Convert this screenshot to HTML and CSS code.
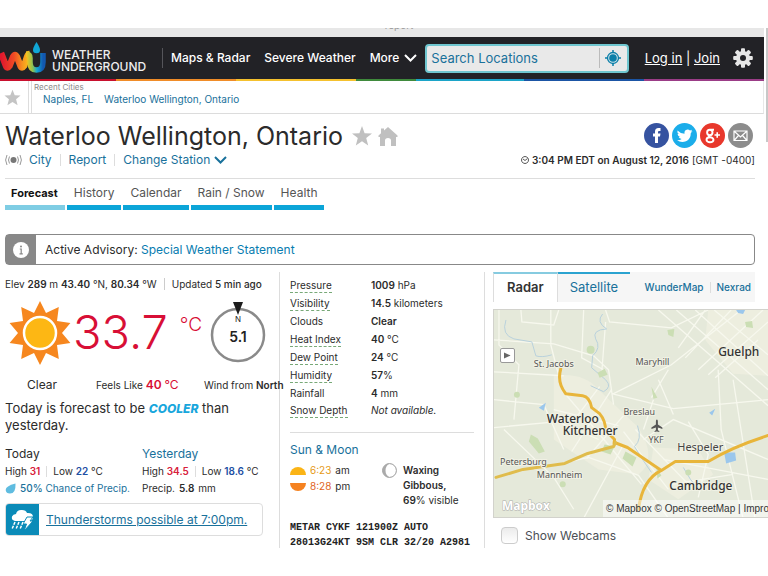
FILE: index.html
```html
<!DOCTYPE html>
<html lang="en">
<head>
<meta charset="utf-8">
<title>Waterloo Wellington, Ontario Forecast | Weather Underground</title>
<link rel="stylesheet" href="styles.css">
</head>
<body>
<div class="window-strip"><span>report</span></div>
<header class="topbar">
  <a class="brand" href="#">
    <svg class="brand-mark" viewBox="0 0 46 32" aria-hidden="true">
      <defs>
        <linearGradient id="warm" x1="0" x2="1"><stop offset="0" stop-color="#e0162e"/><stop offset=".45" stop-color="#f04a24"/><stop offset=".75" stop-color="#f79420"/><stop offset="1" stop-color="#fcc41c"/></linearGradient>
        <linearGradient id="cool" x1="0" x2="1"><stop offset="0" stop-color="#fcc41c"/><stop offset=".4" stop-color="#8cc152"/><stop offset=".65" stop-color="#10a7d6"/><stop offset="1" stop-color="#1258b0"/></linearGradient>
      </defs>
      <path d="M1 11L6 24Q7.500 27 9.500 24L13 15Q15 11 17 15L20.500 24Q22 27 24 24L27 15Q28 12 29.500 12" fill="none" stroke="url(#warm)" stroke-width="6.500"/>
      <path d="M26 12Q30 12 30 16V20Q30 28 36.500 28Q43 28 43 20V11" fill="none" stroke="url(#cool)" stroke-width="5.500"/>
      <path d="M36.500 0Q40 5.500 40 8A3.500 3.300 0 0 1 33 8Q33 5.500 36.500 0Z" fill="#10a7d6"/>
    </svg>
    <span class="brand-name">WEATHER<br>UNDERGROUND</span>
  </a>
  <nav class="mainnav">
    <a href="#">Maps &amp; Radar</a>
    <a href="#">Severe Weather</a>
    <a href="#">More <svg class="chev" viewBox="0 0 13 8" aria-hidden="true"><path d="M1 1L6.500 6.500L12 1"/></svg></a>
  </nav>
  <form class="search">
    <input type="text" placeholder="Search Locations" aria-label="Search Locations">
    <button type="button" aria-label="Use my location">
      <svg viewBox="0 0 16 16" aria-hidden="true"><circle cx="8" cy="8" r="5.500" fill="#cfe3ea" stroke="#0b7fa8" stroke-width="1.300"/><circle cx="8" cy="8" r="3.800" fill="#0b7fa8"/><path d="M8 0V3M8 13V16M0 8H3M13 8H16" stroke="#0b7fa8" stroke-width="1.500"/></svg>
    </button>
  </form>
  <div class="account"><a href="#">Log in</a> | <a href="#">Join</a></div>
  <button class="gear" type="button" aria-label="Settings">
    <svg viewBox="-10 -10 20 20" aria-hidden="true"><g fill="#e6e6e6"><circle r="7"/><g id="cog"><rect x="-2" y="-9.800" width="4" height="19.600" rx="1"/><rect x="-9.800" y="-2" width="19.600" height="4" rx="1"/></g><use href="#cog" transform="rotate(45)"/></g><circle r="3" fill="#222226"/></svg>
  </button>
</header>
<div class="rainbow"><i></i><i></i><i></i><i></i><i></i><i></i><i></i></div>
<div class="recent">
  <button class="star" type="button" aria-label="Favorites"><svg viewBox="0 0 20 20" aria-hidden="true"><path d="M10 1L12.600 7.300L19.500 7.700L14.200 12.100L16 19L10 15.200L4 19L5.800 12.100L.5 7.700L7.400 7.300Z"/></svg></button>
  <div class="recent-list">
    <div class="recent-title">Recent Cities</div>
    <div class="recent-links"><a href="#">Naples, FL</a><a href="#">Waterloo Wellington, Ontario</a></div>
  </div>
</div>

<main>
  <section class="place">
    <div class="place-row">
      <h1>Waterloo Wellington, Ontario</h1>
      <svg class="mark" viewBox="0 0 20 20" aria-hidden="true"><path d="M10 0L12.600 7.300L20 7.500L14.200 12.100L16.200 19.500L10 15.200L3.800 19.500L5.800 12.100L0 7.500L7.400 7.300Z"/></svg>
      <svg class="mark" viewBox="0 0 20 20" aria-hidden="true"><path d="M10 1L19.500 9.500V11H18V20H13V14.500Q13 12 10 12Q7 12 7 14.500V20H2V11H.5V9.500L3 7.200V2.500H6V4.600Z"/></svg>
      <div class="social">
        <a href="#" aria-label="Facebook"><svg viewBox="0 0 25 25"><circle cx="12.500" cy="12.500" r="12.500" fill="#3653a0"/><path d="M11 20V13.500H9V10.500H11V8.500Q11 5 14.500 5H16.500V8H15Q14 8 14 9V10.500H16.500L16 13.500H14V20Z" fill="#fff"/></svg></a>
        <a href="#" aria-label="Twitter"><svg viewBox="0 0 25 25"><circle cx="12.500" cy="12.500" r="12.500" fill="#1badea"/><path d="M5.500 7.500Q8.500 10.700 12.500 10.800Q12 7 15.500 6.500Q17 6.400 18 7.500L20 6.800Q19.700 8 18.700 8.600L20.500 8.200L18.800 10Q18.800 16 14 18.300Q9 20 5 17.300Q8 17.400 9.600 16.100Q7.300 15.700 6.700 14H8Q5.700 13 5.500 10.700L6.800 11Q4.700 9.500 5.500 7.500Z" fill="#fff"/></svg></a>
        <a href="#" aria-label="Google Plus"><svg viewBox="0 0 25 25"><circle cx="12.500" cy="12.500" r="12.500" fill="#e8382c"/><g fill="none" stroke="#fff" stroke-width="1.900"><circle cx="9.800" cy="9.500" r="2.700"/><path d="M10.500 6.800H14M9.500 12.200Q8 13.500 10 14.300"/><ellipse cx="10" cy="16.700" rx="3.500" ry="2.500"/><path d="M14.500 12H20M17.200 9.300V14.700" stroke-width="1.600"/></g></svg></a>
        <a href="#" aria-label="Email"><svg viewBox="0 0 25 25"><circle cx="12.500" cy="12.500" r="12.500" fill="#8c8c8c"/><path d="M6 8H19V17.500H6ZM6.500 8.500L12.500 14L18.500 8.500M6.500 17L10.500 12.500M18.500 17L14.500 12.500" fill="none" stroke="#fff" stroke-width="1.200"/></svg></a>
      </div>
    </div>
    <div class="station-row">
      <svg class="signal" viewBox="0 0 17 12" aria-hidden="true"><circle cx="8.500" cy="6" r="3" fill="#777"/><path d="M4.500 2.500Q2.500 6 4.500 9.500M12.500 2.500Q14.500 6 12.500 9.500M2 1Q-.8 6 2 11M15 1Q17.800 6 15 11" fill="none" stroke="#999"/></svg>
      <a href="#">City</a><a href="#">Report</a><a href="#">Change Station <svg class="chev" viewBox="0 0 13 8" aria-hidden="true"><path d="M1 1L6.500 6.500L12 1"/></svg></a>
      <div class="time"><svg viewBox="0 0 8 8" aria-hidden="true"><path d="M4 .5A3.500 3.500 0 1 0 4.010 .5M2 3L4 4.500L6.500 2.500" fill="none" stroke="#444" stroke-width=".9"/></svg><b>3:04 PM EDT on August 12, 2016</b> [GMT -0400]</div>
    </div>
  </section>

  <nav class="tabs">
    <a class="on" href="#">Forecast</a><a href="#">History</a><a href="#">Calendar</a><a href="#">Rain / Snow</a><a href="#">Health</a>
  </nav>

  <div class="advisory">
    <div class="advisory-icon"><svg viewBox="0 0 16 16" aria-hidden="true"><circle cx="8" cy="8" r="8" fill="#fff"/><circle cx="8" cy="4.500" r="1" fill="#888"/><path d="M6.800 7H8.200V11.800M6.500 11.800H9.800" stroke="#888" fill="none" stroke-width="1.200"/></svg></div>
    <p>Active Advisory: <a href="#">Special Weather Statement</a></p>
  </div>

  <div class="columns">
    <section class="now">
      <div class="meta"><span>Elev <b>289</b> m <b>43.40</b> °N, <b>80.34</b> °W</span><span class="upd">Updated <em>5 min ago</em></span></div>
      <div class="current">
        <svg class="sun" viewBox="-32 -32 64 64" aria-hidden="true"><path fill="#f6871f" d="M0 -32L6 -20L18.800 -25.900L17 -12L30.400 -9.900L22 0L30.400 9.900L17 12L18.800 25.900L6 20L0 32L-6 20L-18.800 25.900L-17 12L-30.400 9.900L-22 0L-30.400 -9.900L-17 -12L-18.800 -25.900L-6 -20Z"/><circle r="16" fill="#fdb714" stroke="#fff" stroke-width="2.500"/></svg>
        <div class="temp">33.7</div><div class="unit">°C</div>
        <svg class="compass" viewBox="0 0 56 62" role="img" aria-label="Wind 5.1 from north"><circle cx="28" cy="34" r="26" fill="none" stroke="#8a8a8a" stroke-width="2.500"/><path d="M23 1H33L28 14Z" fill="#1c1c1c"/><text x="28" y="21" class="n">N</text><text x="28" y="41" class="speed">5.1</text></svg>
      </div>
      <div class="captions"><span>Clear</span><span>Feels Like <b>40</b> <i>°C</i></span><span>Wind from <b>North</b></span></div>
      <p class="outlook">Today is forecast to be <strong>COOLER</strong> than yesterday.</p>
      <div class="days">
        <div>
          <h2>Today</h2>
          <p><span>High <b class="hot">31</b></span><span>Low <b class="cold">22</b> °C</span></p>
          <p><a href="#"><svg class="drop" viewBox="0 0 11 11" aria-hidden="true"><path d="M10.500 .5Q11 10.500 5 10.500Q1 10.500 .7 7Q.5 3 10.500 .5Z" fill="#5fbce0"/></svg><span><em>50%</em> Chance of Precip.</span></a></p>
        </div>
        <div>
          <h2><a href="#">Yesterday</a></h2>
          <p><span>High <b class="hot">34.5</b></span><span>Low <b class="cold">18.6</b> °C</span></p>
          <p>Precip. <b>5.8</b> mm</p>
        </div>
      </div>
      <div class="storm">
        <svg viewBox="0 0 33 31" aria-hidden="true"><rect width="33" height="31" fill="#0b8bb8"/><path d="M9 17Q5 16 6 12.500Q7 10 10 10Q11 5.500 16 6Q20 6 21 9Q27 8.500 27 13Q27 16 24 17Z" fill="#fff"/><path d="M21 13H27L24 17H27L18 27L20.500 20H17Z" fill="#fff" stroke="#0b8bb8"/><path d="M9 18L6 25M13 18L10 25M17 18L14 25" stroke="#fff" stroke-width="1.500" stroke-dasharray="3 1"/></svg>
        <a href="#">Thunderstorms possible at 7:00pm.</a>
      </div>
    </section>

    <section class="details">
      <table>
        <tr><th><span class="tip">Pressure</span></th><td><b>1009</b> hPa</td></tr>
        <tr><th><span class="tip">Visibility</span></th><td><b>14.5</b> kilometers</td></tr>
        <tr><th>Clouds</th><td><b>Clear</b></td></tr>
        <tr><th><span class="tip">Heat Index</span></th><td><b>40</b> °C</td></tr>
        <tr><th><span class="tip">Dew Point</span></th><td><b>24</b> °C</td></tr>
        <tr><th><span class="tip">Humidity</span></th><td><b>57</b>%</td></tr>
        <tr><th>Rainfall</th><td><b>4</b> mm</td></tr>
        <tr><th><span class="tip">Snow Depth</span></th><td><i>Not available.</i></td></tr>
      </table>
      <h2><a href="#">Sun &amp; Moon</a></h2>
      <div class="astro">
        <div>
          <p><svg viewBox="0 0 16 8" aria-hidden="true"><path d="M0 8A8 8 0 0 1 16 8Z" fill="#fbb416"/></svg><span class="rise">6:23</span> am</p>
          <p><svg viewBox="0 0 16 8" aria-hidden="true"><path d="M0 0A8 8 0 0 0 16 0Z" fill="#f58220"/></svg><span class="set">8:28</span> pm</p>
        </div>
        <svg class="moon" viewBox="0 0 15 15" aria-hidden="true"><circle cx="7.500" cy="7.500" r="6.900" fill="#fff" stroke="#999"/><path d="M7.500 .6A6.900 6.900 0 0 0 7.500 14.400Q3.500 12 3.500 7.500Q3.500 3 7.500 .6Z" fill="#aaa"/></svg>
        <div class="phase"><b>Waxing Gibbous,</b><br><b>69</b>% visible</div>
      </div>
      <pre>METAR CYKF 121900Z AUTO
28013G24KT 9SM CLR 32/20 A2981</pre>
    </section>

    <section class="radar">
      <nav class="map-tabs"><a class="on" href="#">Radar</a><a class="sat" href="#">Satellite</a><span class="links"><a href="#">WunderMap</a><a href="#">Nexrad</a></span></nav>
      <div class="map">
        <svg viewBox="0 0 275 209" preserveAspectRatio="xMinYMin slice" role="img" aria-label="Map of Waterloo region">
          <rect width="275" height="209" fill="#e5e9da"/>
          <path fill="#edeedf" d="M60 66Q90 62 105 80L145 118Q165 150 145 165L105 160L60 130ZM215 0H275V66L240 64L212 30ZM160 138L205 140L220 165L185 190L155 170Z"/>
          <g fill="none" stroke="#f7f8ee" stroke-width="1.300"><path d="M0 30L60 34L100 46L115 60L120 95M27 0L28 12L60 15L65 0M57 0V35L65 66M5 0V35L25 55L20 110M90 0L88 48L110 60M112 0L116 12L178 18L215 0M112 12L108 65M0 62L70 66M118 85L178 55L248 0M165 0L275 96M183 0L275 80M202 0L275 66M221 0L275 45M185 38L212 0M192 48L238 0M205 60L270 0M215 65L275 12M222 68L265 30M118 84L180 99L275 90M158 88L175 60M165 70L180 105M160 90L150 120M0 90L50 95L70 140M10 120L60 168L80 200M0 118L64 112L105 130M40 160L95 148L145 166L175 209M90 209L130 135M112 132L148 175M130 122L175 180M142 120L200 180M150 130L180 110L275 150M195 112L215 145L205 188M225 60L228 120L250 209M240 70L262 209M170 150L275 170M178 175L240 165"/><path d="M68 80L112 132M60 100L125 116M78 142L118 80M70 124L106 77M93 149L130 106"/></g>
          <path fill="none" stroke="#b9d1dc" d="M12 10Q7 25 20 29L38 32L42 46Q48 48 58 45M109 4Q102 12 113 19Q98 20 102 29Q108 38 99 46L98 58L112 70Q119 77 110 82L97 76M144 116Q149 130 141 137Q150 152 158 163M190 158Q196 170 206 181"/>
          <g fill="#cbdeb4"><circle cx="97" cy="40" r="4"/><path d="M174 20L181 19L180 27L175 25ZM252 12L259 11L260 18L253 17ZM104 63L111 59L114 65L106 68ZM37 125L44 129L51 142L45 144L35 132ZM158 77L164 88L160 89ZM111 135L121 137L117 145L108 142ZM132 142L143 148L139 157L129 149ZM163 158L168 166L164 169Z"/><circle cx="23" cy="85" r="3"/><circle cx="69" cy="175" r="3"/><circle cx="195" cy="163" r="3"/></g>
          <path fill="#9bc7ec" d="M45 98L52 93L50 101ZM231 143L242 143L243 151L233 154ZM243 0H252L250 4L245 3ZM216 103L222 99L219 106Z"/>
          <g fill="none" stroke="#e8b53a" stroke-width="3" stroke-linejoin="round" stroke-linecap="round"><path d="M67 59Q63 73 72 84L89 86Q96 87 98 98L106 104Q112 111 112 121L121 130Q120 137 121 133L134 138L168 161L182 152H215Q240 137 275 126M168 161Q149 170 145 200"/><path d="M2 168L29 160L71 154L94 144L120 137L122 133" stroke="#e0bc4c"/></g>
          <g class="label"><text x="40" y="57" class="sm">St. Jacobs</text><text x="142" y="55" class="sm">Maryhill</text><text x="225" y="46" class="big">Guelph</text><text x="130" y="105" class="sm">Breslau</text><text x="53" y="113" class="big">Waterloo</text><text x="69" y="125" class="big">Kitchener</text><text x="155" y="133" class="sm">YKF</text><text x="184" y="142" class="mid">Hespeler</text><text x="6" y="156" class="sm">Petersburg</text><text x="43" y="169" class="sm">Mannheim</text><text x="176" y="181" class="big">Cambridge</text></g>
          <path d="M163.500 110Q164.500 110 164.500 112V115L169 118V119.500L164.500 118V120.500L166 122V122.500L163.500 122L161 122.500V122L162.500 120.500V118L158 119.500V118L162.500 115V112Q162.500 110 163.500 110Z" fill="#555"/>
          <text x="8" y="201" class="mapbox">Mapbox</text>
        </svg>
        <button class="play" type="button" aria-label="Play"><svg viewBox="0 0 8 7" aria-hidden="true"><path d="M0 0L7.500 3.500L0 7Z" fill="#666"/></svg></button>
        <div class="credit">© Mapbox © OpenStreetMap | Improve this map</div>
      </div>
      <label class="webcams"><input type="checkbox">Show Webcams</label>
    </section>
  </div>
</main>
</body>
</html>
```
FILE: styles.css
```css
* { box-sizing: border-box; }

body {
  margin: 0;
  padding-top: 28px;
  position: relative;
  background: #fff;
  color: #2b2b2b;
  font: 11px/16px Inter, "Open Sans", sans-serif;
  overflow: hidden;
}

/* scroll bar thumb at the window edge */
body::after {
  content: "";
  position: absolute;
  top: 28px;
  right: 0;
  width: 2px;
  height: 114px;
  background: #c8c8c8;
}

a { color: #19719b; text-decoration: none; }
h1, h2, p, pre { margin: 0; font-weight: 400; }
em { font-style: normal; font-weight: 500; }
b { font-weight: 600; }
button { border: 0; padding: 0; background: none; }
svg { display: block; }

.window-strip {
  height: 9px;
  margin-right: 4px;
  overflow: hidden;
  background: #e7e7e7;
  text-align: center;
}
.window-strip span {
  display: block;
  margin: -10px 0 0 34px;
  color: #999;
  font-size: 10px;
  line-height: 14px;
}

.topbar {
  display: flex;
  align-items: center;
  height: 42px;
  margin-right: 4px;
  background: #222226;
  color: #fff;
}
.topbar a { color: #fff; }
.brand {
  display: flex;
  flex: none;
  align-items: center;
  gap: 6px;
  width: 163px;
  height: 20px;
  border-right: 1px solid #55555a;
}
.brand-mark { width: 46px; height: 32px; flex: none; }
.brand-name { font: 500 12px/12px Inter, sans-serif; padding-top: 6px; color: #eee; }
.mainnav { display: flex; gap: 14px; margin-left: 8px; font-size: 12px; font-weight: 500; white-space: nowrap; }
.mainnav a { display: flex; align-items: center; gap: 5px; }
.chev { width: 13px; height: 8px; fill: none; stroke: currentColor; stroke-width: 2; }
.search {
  display: flex;
  align-items: center;
  flex: 1;
  min-width: 0;
  height: 29px;
  margin-left: 8px;
  background: #e9e9e9;
  border: 2px solid #6fc6cf;
  border-radius: 4px;
}
.search input {
  flex: 1;
  min-width: 0;
  border: 0;
  padding: 0 4px;
  background: none;
  font: 13px/18px Inter, sans-serif;
}
.search input::placeholder { color: #19719b; opacity: 1; }
.search button { width: 28px; height: 20px; border-left: 1px solid #bbb; }
.search button svg { width: 16px; height: 16px; margin: 0 auto; }
.account { margin-left: 16px; font-size: 13px; white-space: nowrap; }
.account a { text-decoration: underline; }
.gear { margin: 0 11px 0 13px; }
.gear svg { width: 20px; height: 20px; }

.rainbow { display: flex; height: 2px; margin-right: 4px; }
.rainbow i { flex: 120; background: #f08c28; }
.rainbow i:nth-child(1) { flex: 116; background: #c8102e; }
.rainbow i:nth-child(3) { background: #f5c12e; }
.rainbow i:nth-child(4) { flex: 60; background: #3f8a3c; }
.rainbow i:nth-child(5) { flex: 108; background: #1ca4c8; }
.rainbow i:nth-child(6) { background: #1b55a5; }
.rainbow i:nth-child(7) { background: #9b3d87; }

.recent {
  display: flex;
  height: 33px;
  margin-right: 4px;
  border-bottom: 1px solid #dcdcdc;
  border-right: 1px solid #e8e8e8;
}
.star { width: 29px; padding-left: 4px; border-right: 1px solid #ddd; }
.star svg { width: 17px; height: 17px; fill: #c4c4c4; }
.recent-list { margin-left: 2px; padding: 1px 0 0 2px; border-left: 1px solid #ddd; }
.recent-title { color: #8a8a8a; font-size: 8px; line-height: 11px; }
.recent-links { display: flex; gap: 11px; padding-left: 9px; font-size: 10px; line-height: 13px; }

main { padding-left: 5px; }
.place { margin-right: 13px; height: 65px; padding-top: 6px; border-bottom: 1px solid #ddd; }
.place-row { display: flex; align-items: center; gap: 6px; height: 31px; }
h1 { margin-right: 3px; font-size: 25px; line-height: 30px; white-space: nowrap; }
.mark { width: 20px; height: 20px; fill: #c0c0c0; }
.social { display: flex; gap: 3px; margin: 0 2px 0 auto; }
.social svg { width: 25px; height: 25px; }
.station-row { display: flex; align-items: center; height: 18px; font-size: 12px; }
.station-row > a { display: flex; align-items: center; gap: 4px; padding: 0 8px; line-height: 12px; border-left: 1px solid #ddd; }
.station-row > .signal + a { padding-left: 7px; border: 0; }
.signal { width: 17px; height: 12px; }
.time { display: flex; align-items: center; gap: 3px; margin-left: auto; font-size: 10px; }
.time svg { width: 8px; height: 8px; }

.tabs { display: flex; gap: 2px; padding-top: 4px; font-size: 12px; }
.tabs a {
  padding: 2px 7px 4px;
  border-bottom: 5px solid #0ca5d8;
  color: #555;
  line-height: 16px;
}
.tabs .on { padding-left: 6px; border-color: #7fcde4; color: #111; font-size: 11px; font-weight: 700; }

.advisory {
  display: flex;
  height: 31px;
  margin: 24px 13px 7px 0;
  border: 1px solid #888;
  border-radius: 4px;
  font-size: 12px;
  line-height: 29px;
}
.advisory-icon { display: flex; align-items: center; justify-content: center; width: 30px; background: #888; }
.advisory svg { width: 16px; height: 16px; }
.advisory p { padding-left: 9px; }
.advisory a { color: #087cb0; }

.columns { display: grid; grid-template-columns: 275fr 205fr 283fr; height: 276px; }
.columns > * { min-width: 0; }

.now { border-right: 1px solid #ddd; }
.meta { display: flex; gap: 7px; padding-top: 4px; font-size: 10px; white-space: nowrap; }
.meta .upd { padding-left: 7px; margin: 2px 0; line-height: 12px; border-left: 1px solid #ccc; }
.current { display: flex; align-items: center; height: 79px; }
.sun { width: 64px; height: 64px; margin: 3px 0 0 3px; flex: none; }
.temp { margin-left: 1px; color: #d80f36; font: 300 47px/56px Inter, sans-serif; }
.unit { margin: -14px 0 0 12px; color: #d80f36; font: 300 19px/20px Inter, sans-serif; }
.compass { width: 56px; height: 62px; margin-left: auto; margin-right: 13px; flex: none; }
.compass text { text-anchor: middle; fill: #222; }
.compass .n { font-size: 8px; }
.compass .speed { font-size: 14px; font-weight: 600; }
.captions { display: flex; padding-top: 6px; height: 28px; font-size: 10px; white-space: nowrap; }
.captions span { flex: none; width: 108px; }
.captions span:first-child { width: 91px; padding-left: 22px; font-size: 12px; }
.captions span:nth-child(2) b, .captions i { color: #d80f36; font-size: 12px; font-style: normal; }
.captions span:last-child { width: 80px; }
.outlook { max-width: 230px; margin-top: 1px; font-size: 13px; line-height: 17px; }
.outlook strong { color: #18a6dc; font-style: italic; font-weight: 800; font-size: 12px; line-height: 12px; }
.days { display: grid; grid-template-columns: 137px 1fr; margin-top: 11px; font-size: 10px; line-height: 17px; white-space: nowrap; }
.days p { display: flex; gap: 4px; }
.days p > span + span { padding-left: 6px; margin: 3px 0 3px 2px; line-height: 11px; border-left: 1px solid #ddd; }
.days p a { display: flex; align-items: center; gap: 4px; }
.hot { color: #d8203a; }
.cold { color: #1d4fa3; }
.drop { width: 11px; height: 11px; }
.storm {
  display: flex;
  align-items: center;
  gap: 7px;
  width: 258px;
  height: 33px;
  margin-top: 6px;
  border: 1px solid #ddd;
  border-radius: 4px;
  font-size: 12px;
}
.storm svg { width: 33px; height: 31px; border-radius: 3px 0 0 3px; }
.storm a { text-decoration: underline; }

h2 { font-size: 12px; line-height: 18px; }

.details { padding: 4px 0 0 10px; border-right: 1px solid #ddd; font-size: 10px; }
.details table { width: 184px; border-collapse: collapse; border-bottom: 1px solid #ddd; margin-bottom: 8px; }
.details tr { height: 18px; }
.details tr:last-child { height: 30px; vertical-align: top; }
.details th { width: 81px; padding: 0; text-align: left; font-weight: 400; line-height: 16px; }
.details td { padding: 0; line-height: 16px; }
.tip { display: inline-block; line-height: 14px; border-bottom: 1px dashed #78a978; }
.astro { display: flex; gap: 6px; margin-top: 4px; line-height: 15px; }
.astro > div:first-child { width: 86px; }
.astro p { display: flex; align-items: center; height: 16px; gap: 4px; }
.astro p svg { width: 16px; height: 8px; }
.rise { color: #e69a17; }
.set { color: #e0641c; }
.moon { width: 15px; height: 15px; }
.phase { width: 70px; }
pre { margin-top: 12px; font: bold 10px/15px "Liberation Mono", monospace; color: #222; }

.radar { padding-left: 8px; }
.map-tabs {
  display: flex;
  height: 30px;
  margin-right: 13px;
  background: #f6f6f6;
  font-size: 12px;
  line-height: 27px;
}
.map-tabs > a { padding: 0 12px; border-top: 2px solid #2ba3d0; font-size: 13px; }
.map-tabs .on { padding: 0 13px; background: #fff; border-top-color: #86cbe0; border-left: 1px solid #ddd; border-right: 1px solid #ddd; color: #333; font-weight: 600; }
.map-tabs .links { display: flex; align-items: center; margin-left: auto; padding-right: 4px; font-size: 10px; line-height: 11px; font-weight: 500; }
.map-tabs .links a + a { margin-left: 6px; padding-left: 6px; border-left: 1px solid #ddd; }
.map { position: relative; height: 209px; margin-top: 7px; border: 1px solid #d2d2cc; border-right: 0; overflow: hidden; }
.map > svg { width: 100%; height: 100%; }
.label { font-family: "Noto Sans", sans-serif; fill: #333; stroke: #f0f1e4; stroke-width: 2px; paint-order: stroke; }
.label .sm { font-size: 9px; fill: #555; }
.label .mid { font-size: 11px; fill: #444; }
.label .big { font-size: 12px; font-weight: 500; }
.mapbox { font: 700 12px "Open Sans", sans-serif; fill: #fff; stroke: #aaa; stroke-width: 1px; paint-order: stroke; }
.play {
  position: absolute;
  left: 6px;
  top: 38px;
  width: 15px;
  height: 15px;
  border: 1px solid #999;
  border-radius: 2px;
  background: #fff;
}
.play svg { width: 7px; height: 7px; margin: 0 auto; }
.credit {
  position: absolute;
  left: 109px;
  bottom: 0;
  padding: 0 3px;
  background: rgba(255, 255, 255, .5);
  color: #333;
  font: 10px/17px "Liberation Sans", sans-serif;
  white-space: nowrap;
}
.webcams { display: flex; align-items: center; gap: 7px; padding: 9px 0 0 8px; color: #4b4f55; font-size: 12px; }
.webcams input {
  appearance: none;
  width: 17px;
  height: 17px;
  margin: 0;
  border: 1px solid #ccc;
  border-radius: 4px;
  background: linear-gradient(#ebebeb, #fff);
}
```
